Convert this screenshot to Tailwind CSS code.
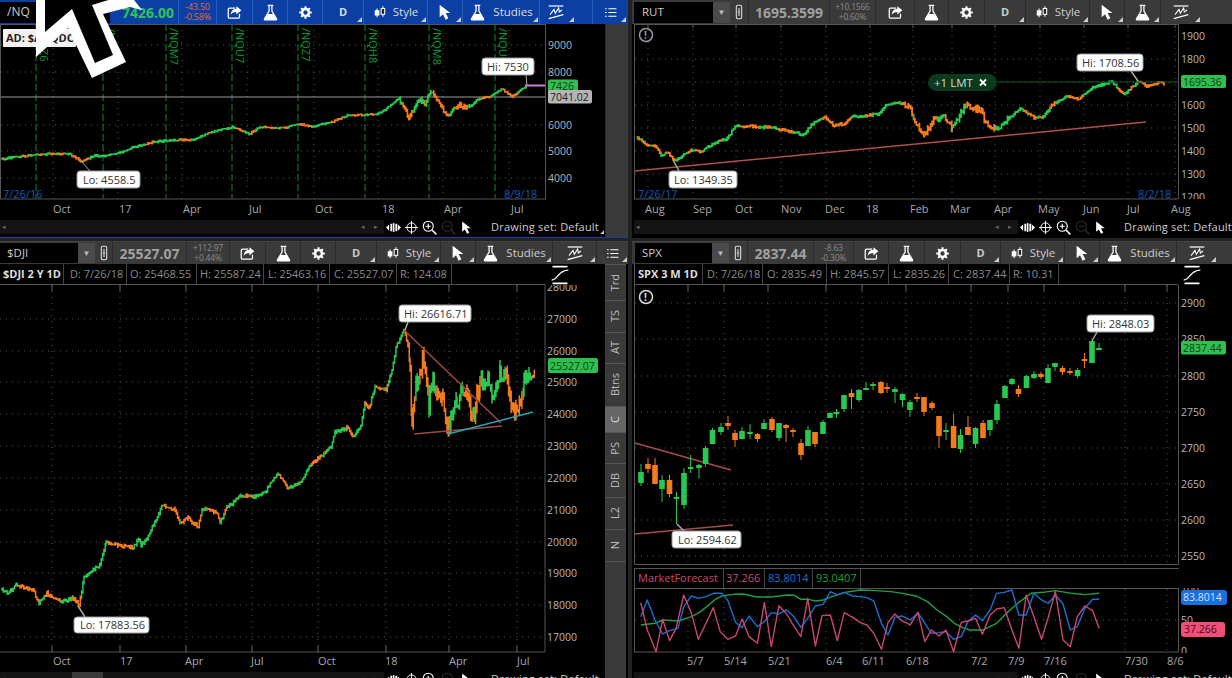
<!DOCTYPE html>
<html>
<head>
<meta charset="utf-8">
<script src="https://cdn.jsdelivr.net/npm/@tailwindcss/browser@4"></script>
<title>Charts</title>
</head>
<body class="m-0 bg-[#222222]">
<svg width="0" height="0" class="absolute">
  <defs>
    <symbol id="share" viewBox="0 0 24 24"><path d="M13 5H4a2 2 0 0 0-2 2v12a2 2 0 0 0 2 2h14a2 2 0 0 0 2-2v-5" fill="none" stroke="#fff" stroke-width="2"/><path d="M15 2l8 6.500-8 6.500v-4c-4 0-7 1-9 5 0-6 3-9.500 9-10z" fill="#fff"/></symbol>
    <symbol id="flask" viewBox="0 0 24 24"><path d="M8 2h8M10 2v8L3.500 21a1 1 0 0 0 1 1.500h15a1 1 0 0 0 1-1.500L14 10V2" fill="none" stroke="#fff" stroke-width="1.800"/><path d="M7.500 14h9l4 8.500h-17z" fill="#fff"/></symbol>
    <symbol id="gear" viewBox="0 0 24 24"><circle cx="12" cy="12" r="5.500" fill="none" stroke="#fff" stroke-width="4"/><path d="M12 2v4M12 18v4M2 12h4M18 12h4M5 5l3 3M16 16l3 3M19 5l-3 3M8 16l-3 3" stroke="#fff" stroke-width="3.200"/></symbol>
    <symbol id="candles" viewBox="0 0 24 24"><path d="M7 6v15M17 2v18" stroke="#fff" stroke-width="1.800"/><rect x="3" y="9" width="8" height="9" fill="#fff"/><rect x="14" y="6" width="6" height="10" fill="#222" stroke="#fff" stroke-width="1.800"/></symbol>
    <symbol id="arrow" viewBox="0 0 24 24"><path d="M4 1v19l5-4.500 4 8 4-2-4-8h7z" fill="#fff"/></symbol>
    <symbol id="draw" viewBox="0 0 24 24"><path d="M1 3h22" stroke="#fff" stroke-width="1.800"/><path d="M3 16l6-8 2 6 5-8 1 6 4-3" fill="none" stroke="#fff" stroke-width="1.600"/><path d="M1 22l22-6" stroke="#fff" stroke-width="1.800"/></symbol>
    <symbol id="list" viewBox="0 0 24 24"><path d="M8 5h15M8 12h15M8 19h15M2 5h3M2 12h3M2 19h3" stroke="#fff" stroke-width="2"/></symbol>
    <symbol id="link" viewBox="0 0 12 24"><rect x="2" y="2" width="8" height="20" rx="2" fill="none" stroke="#ddd" stroke-width="1.600"/><path d="M6 6v12" stroke="#ddd" stroke-width="1.600"/><path d="M4 12h4" stroke="#ddd"/></symbol>
    <symbol id="pan" viewBox="0 0 24 16"><path d="M0 8l5-5v10zM24 8l-5-5v10z" fill="#fff"/><rect x="7" y="2" width="3" height="12" fill="#fff"/><rect x="11" y="1" width="2.500" height="14" fill="#fff"/><rect x="15" y="2" width="3" height="12" fill="#fff"/></symbol>
    <symbol id="cross" viewBox="0 0 24 24"><circle cx="12" cy="12" r="8.500" fill="none" stroke="#fff" stroke-width="1.800"/><path d="M12 0v24M0 12h24" stroke="#fff" stroke-width="1.800"/></symbol>
    <symbol id="zoomin" viewBox="0 0 24 24"><circle cx="10" cy="10" r="8" fill="none" stroke="#fff" stroke-width="1.800"/><path d="M6 10h8M10 6v8" stroke="#fff" stroke-width="1.800"/><path d="M16 16l7 7" stroke="#fff" stroke-width="2.400"/></symbol>
    <symbol id="zoomout" viewBox="0 0 24 24"><circle cx="10" cy="10" r="8" fill="none" stroke="#2c2c2c" stroke-width="1.800"/><path d="M6 10h8" stroke="#2c2c2c" stroke-width="1.800"/><path d="M16 16l7 7" stroke="#2c2c2c" stroke-width="2.400"/></symbol>
    <symbol id="curve" viewBox="0 0 24 24"><path d="M3 2h18M3 22h18" stroke="#fff" stroke-width="2"/><path d="M2 18c8 0 7-12 20-12" fill="none" stroke="#fff" stroke-width="1.500"/></symbol>
  </defs>
</svg>

<div class="relative flex h-[678px] w-[1232px] overflow-hidden bg-[#222222] font-['Open_Sans',sans-serif]">

  <!-- LEFT COLUMN -->
  <div class="flex w-[632px] shrink-0 flex-col gap-[3px] pr-[4px]">

    <!-- /NQ panel -->
    <section class="flex h-[238px] w-[628px] shrink-0 flex-col overflow-hidden border-r border-b border-[#0b44ad] bg-black">
      <header class="flex h-[24px] shrink-0 items-center bg-[#0b3fa3] text-[#dddddd]">
        <div class="flex h-[21px] w-[110px] items-center bg-black pl-[7px] text-[12px] text-[#cccccc]">/NQ</div>
        <div class="w-[8px]"></div>
        <div class="flex h-full w-[61px] items-center justify-center border-r border-[#2a5bc0] text-[14px] font-bold text-[#2fc45a]">7426.00</div>
        <div class="flex h-full w-[38px] flex-col items-center justify-center border-r border-[#2a5bc0] text-[9px] leading-[10px] tracking-tight text-[#e0683c]"><span>-43.50</span><span>-0.58%</span></div>
        <div class="flex h-full w-[36px] items-center justify-center border-r border-[#2a5bc0]"><svg class="h-[15px] w-[15px]"><use href="#share"/></svg></div>
        <div class="flex h-full w-[35px] items-center justify-center border-r border-[#2a5bc0]"><svg class="h-[17px] w-[17px]"><use href="#flask"/></svg></div>
        <div class="flex h-full w-[35px] items-center justify-center border-r border-[#2a5bc0]"><svg class="h-[15px] w-[15px]"><use href="#gear"/></svg></div>
        <div class="relative flex h-full w-[41px] items-center justify-center border-r border-[#2a5bc0] text-[11px] font-bold">D<span class="absolute right-[1px] bottom-[2px] h-[5px] w-[5px] bg-[#cccccc] [clip-path:polygon(100%_0,100%_100%,0_100%)]"></span></div>
        <div class="relative flex h-full w-[64px] items-center justify-center gap-[6px] border-r border-[#2a5bc0] text-[11.500px]"><svg class="h-[14px] w-[14px]"><use href="#candles"/></svg>Style<span class="absolute right-[1px] bottom-[2px] h-[5px] w-[5px] bg-[#cccccc] [clip-path:polygon(100%_0,100%_100%,0_100%)]"></span></div>
        <div class="relative flex h-full w-[35px] items-center justify-center border-r border-[#2a5bc0]"><svg class="h-[16px] w-[16px]"><use href="#arrow"/></svg><span class="absolute right-[1px] bottom-[2px] h-[5px] w-[5px] bg-[#cccccc] [clip-path:polygon(100%_0,100%_100%,0_100%)]"></span></div>
        <div class="relative flex h-full w-[77px] items-center justify-center gap-[7px] border-r border-[#2a5bc0] text-[11.500px]"><svg class="h-[17px] w-[17px]"><use href="#flask"/></svg>Studies<span class="absolute right-[1px] bottom-[2px] h-[5px] w-[5px] bg-[#cccccc] [clip-path:polygon(100%_0,100%_100%,0_100%)]"></span></div>
        <div class="relative flex h-full w-[53px] items-center justify-start border-r border-[#2a5bc0] pl-[8px]"><svg class="h-[16px] w-[16px]"><use href="#draw"/></svg><span class="absolute right-[18px] bottom-[2px] h-[5px] w-[5px] bg-[#cccccc] [clip-path:polygon(100%_0,100%_100%,0_100%)]"></span></div>
        <div class="relative flex h-full flex-1 items-center justify-center"><svg class="h-[13px] w-[13px]"><use href="#list"/></svg><span class="absolute right-[1px] bottom-[2px] h-[5px] w-[5px] bg-[#cccccc] [clip-path:polygon(100%_0,100%_100%,0_100%)]"></span></div>
      </header>
      <div class="flex min-h-0 flex-1">
        <div class="flex w-[605px] shrink-0 flex-col">
          <svg class="block shrink-0" width="605" height="196" viewBox="0 24 605 196" font-size="10.500">
            <g stroke="#555" stroke-dasharray="1 5">
              <path d="M1 45H545M1 72H545M1 125H545M1 151H545M1 178H545"/>
              <path d="M53 24V199M118 24V199M182 24V199M247 24V199M314 24V199M378 24V199M443 24V199M509 24V199"/>
            </g>
            <g stroke="#0c8a30" stroke-dasharray="7 3">
              <path d="M36 24V199M103 24V199M166 24V199M232 24V199M298 24V199M365 24V199M429 24V199M495 24V199"/>
            </g>
            <g fill="#0f9a38" font-size="11">
              <text transform="translate(40 28) rotate(90)">/NQZ6</text>
              <text transform="translate(107 28) rotate(90)">/NQH7</text>
              <text transform="translate(170 28) rotate(90)">/NQM7</text>
              <text transform="translate(236 28) rotate(90)">/NQU7</text>
              <text transform="translate(302 28) rotate(90)">/NQZ7</text>
              <text transform="translate(369 28) rotate(90)">/NQH8</text>
              <text transform="translate(433 28) rotate(90)">/NQM8</text>
              <text transform="translate(499 28) rotate(90)">/NQU8</text>
            </g>
            <path d="M1 97H545" stroke="#9a9a9a"/>
            <path id="p1g" fill="none" stroke="#27c950" stroke-width="1.700"/>
            <path id="p1o" fill="none" stroke="#f47a1e" stroke-width="1.700"/>
            <path d="M525 85.500H545" stroke="#d080d8" stroke-width="2"/>
            <rect x="0.500" y="24.500" width="545" height="174.500" fill="none" stroke="#555"/>
            <rect x="3" y="29" width="73" height="18" rx="1" fill="#f2f2f2"/>
            <text x="6" y="42" font-size="11" font-weight="700" fill="#222">AD: $ADQDC</text>
            <g fill="#0f5cb8" font-size="11">
              <text x="3" y="198">7/26/16</text>
              <text x="504" y="198">8/9/18</text>
            </g>
            <g fill="#b8b8b8">
              <text x="548" y="49">9000</text><text x="548" y="76">8000</text><text x="548" y="129">6000</text><text x="548" y="155">5000</text><text x="548" y="182">4000</text>
            </g>
            <rect x="548" y="79.500" width="30" height="13" rx="2" fill="#2fbf4f"/><text x="550" y="90" fill="#0f3d1a">7426</text>
            <rect x="548" y="90" width="44" height="13.500" rx="2" fill="#b5b5b5"/><text x="550" y="101" fill="#222">7041.02</text>
            <path d="M526 75L527 85.500" stroke="#aaa"/>
            <rect x="482" y="58" width="52" height="17" rx="3" fill="#fff" stroke="#999"/><text x="487" y="71" fill="#333" font-size="11">Hi: 7530</text>
            <path d="M81 161L90 171" stroke="#aaa"/>
            <rect x="77" y="171" width="63" height="17" rx="3" fill="#fff" stroke="#999"/><text x="83" y="184" fill="#333" font-size="11">Lo: 4558.5</text>
            <g fill="#a8a8a8" font-size="11">
              <text x="53" y="213">Oct</text><text x="119" y="213">17</text><text x="183" y="213">Apr</text><text x="249" y="213">Jul</text><text x="315" y="213">Oct</text><text x="382" y="213">18</text><text x="444" y="213">Apr</text><text x="511" y="213">Jul</text>
            </g>
          </svg>
          <div class="flex h-[14px] shrink-0 items-center text-[#cccccc]">
            <div class="flex h-full w-[384px] items-center justify-between bg-[#141414] px-[2px] text-[7px] text-[#666666]"><span>◂</span><span class="flex gap-[9px] pr-[4px]"><span>◂</span><span>▸</span></span></div>
            <div class="flex items-center gap-[4px] pl-[2px]">
              <svg class="h-[11px] w-[15px]"><use href="#pan"/></svg>
              <svg class="h-[13px] w-[13px]"><use href="#cross"/></svg>
              <svg class="h-[15px] w-[15px]"><use href="#zoomin"/></svg>
              <svg class="h-[15px] w-[15px]"><use href="#zoomout"/></svg>
              <svg class="h-[15px] w-[13px]"><use href="#arrow"/></svg>
            </div>
            <span class="relative ml-[18px] flex-1 whitespace-nowrap text-[11px] tracking-[0.2px]">Drawing set: Default<span class="absolute right-[1px] bottom-[1px] h-[4px] w-[4px] bg-[#cccccc] [clip-path:polygon(100%_0,100%_100%,0_100%)]"></span></span>
          </div>
        </div>
        <aside class="mb-[0px] flex-1 border-l border-[#2b2b2b] bg-[#3a3a3a]"></aside>
      </div>
    </section>

    <!-- $DJI panel -->
    <section class="flex h-[437px] w-[628px] shrink-0 flex-col overflow-hidden border-t border-[#444444] bg-black">
      <header class="flex h-[22px] shrink-0 items-center bg-[#3a3a3a] text-[#cccccc]">
        <div class="flex h-[20px] w-[95px] items-center justify-between bg-black pl-[7px] text-[11.500px] text-[#cccccc]">$DJI<span class="flex h-full w-[17px] items-center justify-center bg-[#4a4a4a] text-[8px] text-[#bbbbbb]">▼</span></div>
        <div class="flex h-full w-[18px] items-center justify-center border-r border-[#2b2b2b]"><svg class="h-[16px] w-[8px]"><use href="#link"/></svg></div>
        <div class="flex h-full w-[74px] items-center justify-center border-r border-[#2b2b2b] text-[14px] font-bold text-[#a0a0a0]">25527.07</div>
        <div class="flex h-full w-[43px] flex-col items-center justify-center border-r border-[#2b2b2b] text-[8.500px] leading-[10px] tracking-tight text-[#8a8a8a]"><span>+112.97</span><span>+0.44%</span></div>
        <div class="flex h-full w-[36px] items-center justify-center border-r border-[#2b2b2b]"><svg class="h-[15px] w-[15px]"><use href="#share"/></svg></div>
        <div class="flex h-full w-[35px] items-center justify-center border-r border-[#2b2b2b]"><svg class="h-[17px] w-[17px]"><use href="#flask"/></svg></div>
        <div class="flex h-full w-[35px] items-center justify-center border-r border-[#2b2b2b]"><svg class="h-[15px] w-[15px]"><use href="#gear"/></svg></div>
        <div class="relative flex h-full w-[41px] items-center justify-center border-r border-[#2b2b2b] text-[11px] font-bold">D<span class="absolute right-[1px] bottom-[2px] h-[5px] w-[5px] bg-[#cccccc] [clip-path:polygon(100%_0,100%_100%,0_100%)]"></span></div>
        <div class="relative flex h-full w-[64px] items-center justify-center gap-[6px] border-r border-[#2b2b2b] text-[11.500px]"><svg class="h-[14px] w-[14px]"><use href="#candles"/></svg>Style<span class="absolute right-[1px] bottom-[2px] h-[5px] w-[5px] bg-[#cccccc] [clip-path:polygon(100%_0,100%_100%,0_100%)]"></span></div>
        <div class="relative flex h-full w-[35px] items-center justify-center border-r border-[#2b2b2b]"><svg class="h-[16px] w-[16px]"><use href="#arrow"/></svg><span class="absolute right-[1px] bottom-[2px] h-[5px] w-[5px] bg-[#cccccc] [clip-path:polygon(100%_0,100%_100%,0_100%)]"></span></div>
        <div class="relative flex h-full w-[77px] items-center justify-center gap-[7px] border-r border-[#2b2b2b] text-[11.500px]"><svg class="h-[17px] w-[17px]"><use href="#flask"/></svg>Studies<span class="absolute right-[1px] bottom-[2px] h-[5px] w-[5px] bg-[#cccccc] [clip-path:polygon(100%_0,100%_100%,0_100%)]"></span></div>
        <div class="relative flex h-full w-[44px] items-center justify-center border-r border-[#2b2b2b]"><svg class="h-[16px] w-[16px]"><use href="#draw"/></svg><span class="absolute right-[1px] bottom-[2px] h-[5px] w-[5px] bg-[#cccccc] [clip-path:polygon(100%_0,100%_100%,0_100%)]"></span></div>
        <div class="relative flex h-full flex-1 items-center justify-center"><svg class="h-[13px] w-[13px]"><use href="#list"/></svg><span class="absolute right-[1px] bottom-[2px] h-[5px] w-[5px] bg-[#cccccc] [clip-path:polygon(100%_0,100%_100%,0_100%)]"></span></div>
      </header>
      <div class="flex min-h-0 flex-1">
        <div class="flex w-[605px] shrink-0 flex-col">
          <div class="flex h-[21px] shrink-0">
            <div class="flex w-[545px] border-b border-[#555555] text-[11px] text-[#8a8a8a]">
              <div class="flex w-[64px] items-center border-r border-[#444444] pl-[3px] font-bold text-[#dddddd]">$DJI 2 Y 1D</div>
              <div class="flex w-[63px] items-center border-r border-[#444444] pl-[6px]">D: 7/26/18</div>
              <div class="flex w-[70px] items-center border-r border-[#444444] pl-[3px]">O: 25468.55</div>
              <div class="flex w-[67px] items-center border-r border-[#444444] pl-[3px]">H: 25587.24</div>
              <div class="flex w-[66px] items-center border-r border-[#444444] pl-[4px]">L: 25463.16</div>
              <div class="flex w-[67px] items-center border-r border-[#444444] pl-[4px]">C: 25527.07</div>
              <div class="flex w-[55px] items-center border-r border-[#444444] pl-[3px]">R: 124.08</div>
            </div>
            <div class="flex flex-1 items-center pl-[5px]"><svg class="h-[20px] w-[20px]"><use href="#curve"/></svg></div>
          </div>
          <svg class="block shrink-0" width="605" height="387" viewBox="0 285 605 387" font-size="10.500">
            <g stroke="#555" stroke-dasharray="1 5">
              <path d="M0 319H545M0 351H545M0 382H545M0 414H545M0 446H545M0 478H545M0 510H545M0 542H545M0 573H545M0 605H545M0 637H545"/>
              <path d="M52 285V652M120 285V652M186 285V652M252 285V652M318 285V652M386 285V652M449 285V652M517 285V652"/>
            </g>
            <path d="M52 285V291M120 285V291M186 285V291M252 285V291M318 285V291M386 285V291M449 285V291M517 285V291M52 652V646M120 652V646M186 652V646M252 652V646M318 652V646M386 652V646M449 652V646M517 652V646" stroke="#666"/>
            <path id="p3g" fill="none" stroke="#27c950" stroke-width="1.500"/>
            <path id="p3o" fill="none" stroke="#f47a1e" stroke-width="1.500"/>
            <g fill="none" stroke-width="1.500">
              <path d="M404 330L501 423M414 434L502 426" stroke="#a04a48"/>
              <path d="M448 434L533 412" stroke="#1fa8b8"/>
            </g>
            <path d="M0 652H545M545 285V652" stroke="#555"/>
            <g fill="#b8b8b8">
              <text x="547" y="291">28000</text><text x="547" y="323">27000</text><text x="547" y="355">26000</text><text x="547" y="386">25000</text><text x="547" y="418">24000</text><text x="547" y="450">23000</text><text x="547" y="482">22000</text><text x="547" y="514">21000</text><text x="547" y="546">20000</text><text x="547" y="577">19000</text><text x="547" y="609">18000</text><text x="547" y="641">17000</text>
            </g>
            <rect x="548" y="358" width="50" height="15" rx="2" fill="#2fbf4f"/><text x="550" y="369.500" fill="#0f3d1a">25527.07</text>
            <path d="M405 330L408 322" stroke="#aaa" stroke-width="1.500"/>
            <rect x="399" y="305" width="72" height="17" rx="3" fill="#fff" stroke="#999"/><text x="404" y="318" fill="#333" font-size="11">Hi: 26616.71</text>
            <path d="M78 606L85 617" stroke="#aaa" stroke-width="1.500"/>
            <rect x="74" y="617" width="75" height="16" rx="3" fill="#fff" stroke="#999"/><text x="80" y="629" fill="#333" font-size="11">Lo: 17883.56</text>
            <g fill="#a8a8a8" font-size="11">
              <text x="53" y="665">Oct</text><text x="120" y="665">17</text><text x="185" y="665">Apr</text><text x="251" y="665">Jul</text><text x="318" y="665">Oct</text><text x="385" y="665">18</text><text x="449" y="665">Apr</text><text x="517" y="665">Jul</text>
            </g>
          </svg>
          <div class="flex h-[14px] shrink-0 items-center text-[#cccccc]">
            <div class="relative flex h-full w-[384px] items-center justify-between bg-[#141414] px-[2px] text-[7px] text-[#666666]"><span>◂</span><span class="absolute left-[72px] top-0 h-full w-[31px] bg-[#3a3a3a]"></span><span class="flex gap-[9px] pr-[4px]"><span>◂</span><span>▸</span></span></div>
            <div class="flex items-center gap-[4px] pl-[2px]">
              <svg class="h-[11px] w-[15px]"><use href="#pan"/></svg>
              <svg class="h-[13px] w-[13px]"><use href="#cross"/></svg>
              <svg class="h-[15px] w-[15px]"><use href="#zoomin"/></svg>
              <svg class="h-[15px] w-[15px]"><use href="#zoomout"/></svg>
              <svg class="h-[15px] w-[13px]"><use href="#arrow"/></svg>
            </div>
            <span class="ml-[18px] whitespace-nowrap text-[11px] tracking-[0.2px]">Drawing set: Default</span>
          </div>
        </div>
        <nav class="flex w-[21px] shrink-0 flex-col border-t border-[#555555] bg-[#3a3a3a] text-[11px] text-[#bbbbbb]">
          <div class="flex h-[36px] items-center justify-center border-b border-[#555555]"><span class="rotate-180 [writing-mode:vertical-rl]">Trd</span></div>
          <div class="flex h-[32px] items-center justify-center border-b border-[#555555]"><span class="rotate-180 [writing-mode:vertical-rl]">TS</span></div>
          <div class="flex h-[31px] items-center justify-center border-b border-[#555555]"><span class="rotate-180 [writing-mode:vertical-rl]">AT</span></div>
          <div class="flex h-[43px] items-center justify-center border-b border-[#555555]"><span class="rotate-180 [writing-mode:vertical-rl]">Btns</span></div>
          <div class="flex h-[26px] items-center justify-center border-b border-[#555555] bg-[#666666] text-[#dddddd]"><span class="rotate-180 [writing-mode:vertical-rl]">C</span></div>
          <div class="flex h-[31px] items-center justify-center border-b border-[#555555]"><span class="rotate-180 [writing-mode:vertical-rl]">PS</span></div>
          <div class="flex h-[34px] items-center justify-center border-b border-[#555555]"><span class="rotate-180 [writing-mode:vertical-rl]">DB</span></div>
          <div class="flex h-[32px] items-center justify-center border-b border-[#555555]"><span class="rotate-180 [writing-mode:vertical-rl]">L2</span></div>
          <div class="flex h-[32px] items-center justify-center border-b border-[#555555]"><span class="rotate-180 [writing-mode:vertical-rl]">N</span></div>
        </nav>
      </div>
    </section>
  </div>

  <!-- RIGHT COLUMN -->
  <div class="flex w-[600px] shrink-0 flex-col gap-[3px]">

    <!-- RUT panel -->
    <section class="flex h-[238px] w-[600px] shrink-0 flex-col overflow-hidden bg-black">
      <header class="flex h-[24px] shrink-0 items-center bg-[#3a3a3a] text-[#cccccc]">
        <div class="ml-[2px] flex h-[21px] w-[96px] items-center justify-between bg-black pl-[8px] text-[11.500px] text-[#cccccc]">RUT<span class="flex h-full w-[17px] items-center justify-center bg-[#4a4a4a] text-[8px] text-[#bbbbbb]">▼</span></div>
        <div class="flex h-full w-[19px] items-center justify-center border-r border-[#2b2b2b]"><svg class="h-[16px] w-[8px]"><use href="#link"/></svg></div>
        <div class="flex h-full w-[81px] items-center justify-center border-r border-[#2b2b2b] text-[14px] font-bold text-[#a0a0a0]">1695.3599</div>
        <div class="flex h-full w-[46px] flex-col items-center justify-center border-r border-[#2b2b2b] text-[8.500px] leading-[10px] tracking-tight text-[#8a8a8a]"><span>+10.1566</span><span>+0.60%</span></div>
        <div class="flex h-full w-[39px] items-center justify-center border-r border-[#2b2b2b]"><svg class="h-[15px] w-[15px]"><use href="#share"/></svg></div>
        <div class="flex h-full w-[34px] items-center justify-center border-r border-[#2b2b2b]"><svg class="h-[17px] w-[17px]"><use href="#flask"/></svg></div>
        <div class="flex h-full w-[36px] items-center justify-center border-r border-[#2b2b2b]"><svg class="h-[15px] w-[15px]"><use href="#gear"/></svg></div>
        <div class="relative flex h-full w-[41px] items-center justify-center border-r border-[#2b2b2b] text-[11px] font-bold">D<span class="absolute right-[1px] bottom-[2px] h-[5px] w-[5px] bg-[#cccccc] [clip-path:polygon(100%_0,100%_100%,0_100%)]"></span></div>
        <div class="relative flex h-full w-[64px] items-center justify-center gap-[6px] border-r border-[#2b2b2b] text-[11.500px]"><svg class="h-[14px] w-[14px]"><use href="#candles"/></svg>Style<span class="absolute right-[1px] bottom-[2px] h-[5px] w-[5px] bg-[#cccccc] [clip-path:polygon(100%_0,100%_100%,0_100%)]"></span></div>
        <div class="relative flex h-full w-[35px] items-center justify-center border-r border-[#2b2b2b]"><svg class="h-[16px] w-[16px]"><use href="#arrow"/></svg><span class="absolute right-[1px] bottom-[2px] h-[5px] w-[5px] bg-[#cccccc] [clip-path:polygon(100%_0,100%_100%,0_100%)]"></span></div>
        <div class="relative flex h-full w-[36px] items-center justify-center border-r border-[#2b2b2b]"><svg class="h-[17px] w-[17px]"><use href="#flask"/></svg><span class="absolute right-[1px] bottom-[2px] h-[5px] w-[5px] bg-[#cccccc] [clip-path:polygon(100%_0,100%_100%,0_100%)]"></span></div>
        <div class="relative flex h-full w-[40px] items-center justify-center"><svg class="h-[16px] w-[16px]"><use href="#draw"/></svg><span class="absolute right-[1px] bottom-[2px] h-[5px] w-[5px] bg-[#cccccc] [clip-path:polygon(100%_0,100%_100%,0_100%)]"></span></div>
      </header>
      <svg class="block shrink-0" width="600" height="196" viewBox="632 24 600 196" font-size="10.500">
        <g stroke="#555" stroke-dasharray="1 5">
          <path d="M635 59H1178M635 82H1178M635 105H1178M635 128H1178M635 151H1178M635 174H1178"/>
          <path d="M648 24V199M693 24V199M736 24V199M781 24V199M826 24V199M870 24V199M913 24V199M952 24V199M995 24V199M1040 24V199M1084 24V199M1128 24V199M1175 24V199"/>
        </g>
        <path d="M648 24V28M693 24V28M736 24V28M781 24V28M826 24V28M870 24V28M913 24V28M952 24V28M995 24V28M1040 24V28M1084 24V28M1128 24V28M1175 24V28" stroke="#666"/>
        <path d="M634.500 171L1146 122" stroke="#b0504c" stroke-width="1.500"/>
        <path id="p2g" fill="none" stroke="#27c950" stroke-width="1.800"/>
        <path id="p2o" fill="none" stroke="#f47a1e" stroke-width="1.800"/>
        <path d="M925 82V143" stroke="none"/>
        <path d="M997 82H1178" stroke="#0d5a26"/>
        <rect x="634.500" y="24.500" width="544" height="174.500" fill="none" stroke="#555"/>
        <circle cx="646" cy="35" r="6.500" fill="none" stroke="#999" stroke-width="1.500"/>
        <text x="644" y="39" fill="#999" font-size="10" font-weight="700">!</text>
        <rect x="928" y="74" width="69" height="17" rx="8.500" fill="#0b3a1c"/>
        <text x="934" y="86.500" fill="#d8d8d8" font-size="11.500">+1 LMT</text>
        <path d="M980 79.500l6 6M986 79.500l-6 6" stroke="#fff" stroke-width="1.800"/>
        <g fill="#0f5cb8" font-size="11">
          <text x="638" y="198">7/26/17</text>
          <text x="1138" y="198">8/2/18</text>
        </g>
        <g fill="#b8b8b8">
          <text x="1181" y="40">1900</text><text x="1181" y="63">1800</text><text x="1181" y="109">1600</text><text x="1181" y="132">1500</text><text x="1181" y="155">1400</text><text x="1181" y="178">1300</text><text x="1181" y="201">1200</text>
        </g>
        <rect x="1178" y="199" width="54" height="21" fill="#000"/>
        <rect x="1181" y="75" width="45" height="13" rx="2" fill="#2fbf4f"/><text x="1183" y="85.500" fill="#0f3d1a">1695.36</text>
        <path d="M1138 81L1131 71" stroke="#aaa" stroke-width="1.500"/>
        <rect x="1077" y="54" width="66" height="17" rx="3" fill="#fff" stroke="#999"/><text x="1082" y="67" fill="#333" font-size="11">Hi: 1708.56</text>
        <path d="M673 160L679 171" stroke="#aaa" stroke-width="1.500"/>
        <rect x="669" y="171" width="68" height="17" rx="3" fill="#fff" stroke="#999"/><text x="674" y="184" fill="#333" font-size="11">Lo: 1349.35</text>
        <g fill="#a8a8a8" font-size="11">
          <text x="645" y="213">Aug</text><text x="693" y="213">Sep</text><text x="735" y="213">Oct</text><text x="781" y="213">Nov</text><text x="825" y="213">Dec</text><text x="866" y="213">18</text><text x="910" y="213">Feb</text><text x="950" y="213">Mar</text><text x="994" y="213">Apr</text><text x="1038" y="213">May</text><text x="1083" y="213">Jun</text><text x="1127" y="213">Jul</text><text x="1171" y="213">Aug</text>
        </g>
      </svg>
      <div class="flex h-[14px] shrink-0 items-center text-[#cccccc]">
        <div class="ml-[2px] flex h-full w-[384px] items-center justify-between bg-[#141414] px-[2px] text-[7px] text-[#666666]"><span>◂</span><span class="flex gap-[9px] pr-[4px]"><span>◂</span><span>▸</span></span></div>
        <div class="flex items-center gap-[4px] pl-[2px]">
          <svg class="h-[11px] w-[15px]"><use href="#pan"/></svg>
          <svg class="h-[13px] w-[13px]"><use href="#cross"/></svg>
          <svg class="h-[15px] w-[15px]"><use href="#zoomin"/></svg>
          <svg class="h-[15px] w-[15px]"><use href="#zoomout"/></svg>
          <svg class="h-[15px] w-[13px]"><use href="#arrow"/></svg>
        </div>
        <span class="ml-[17px] whitespace-nowrap text-[11px] tracking-[0.2px]">Drawing set: Default</span>
      </div>
    </section>

    <!-- SPX panel -->
    <section class="flex h-[437px] w-[600px] shrink-0 flex-col overflow-hidden border-t border-[#444444] bg-black">
      <header class="flex h-[22px] shrink-0 items-center bg-[#3a3a3a] text-[#cccccc]">
        <div class="ml-[3px] flex h-[20px] w-[94px] items-center justify-between bg-black pl-[7px] text-[11.500px] text-[#cccccc]">SPX<span class="flex h-full w-[17px] items-center justify-center bg-[#4a4a4a] text-[8px] text-[#bbbbbb]">▼</span></div>
        <div class="flex h-full w-[19px] items-center justify-center border-r border-[#2b2b2b]"><svg class="h-[16px] w-[8px]"><use href="#link"/></svg></div>
        <div class="flex h-full w-[66px] items-center justify-center border-r border-[#2b2b2b] text-[14px] font-bold text-[#a0a0a0]">2837.44</div>
        <div class="flex h-full w-[40px] flex-col items-center justify-center border-r border-[#2b2b2b] text-[8.500px] leading-[10px] tracking-tight text-[#8a8a8a]"><span>-8.63</span><span>-0.30%</span></div>
        <div class="flex h-full w-[35px] items-center justify-center border-r border-[#2b2b2b]"><svg class="h-[15px] w-[15px]"><use href="#share"/></svg></div>
        <div class="flex h-full w-[36px] items-center justify-center border-r border-[#2b2b2b]"><svg class="h-[17px] w-[17px]"><use href="#flask"/></svg></div>
        <div class="flex h-full w-[36px] items-center justify-center border-r border-[#2b2b2b]"><svg class="h-[15px] w-[15px]"><use href="#gear"/></svg></div>
        <div class="relative flex h-full w-[40px] items-center justify-center border-r border-[#2b2b2b] text-[11px] font-bold">D<span class="absolute right-[1px] bottom-[2px] h-[5px] w-[5px] bg-[#cccccc] [clip-path:polygon(100%_0,100%_100%,0_100%)]"></span></div>
        <div class="relative flex h-full w-[64px] items-center justify-center gap-[6px] border-r border-[#2b2b2b] text-[11.500px]"><svg class="h-[14px] w-[14px]"><use href="#candles"/></svg>Style<span class="absolute right-[1px] bottom-[2px] h-[5px] w-[5px] bg-[#cccccc] [clip-path:polygon(100%_0,100%_100%,0_100%)]"></span></div>
        <div class="relative flex h-full w-[35px] items-center justify-center border-r border-[#2b2b2b]"><svg class="h-[16px] w-[16px]"><use href="#arrow"/></svg><span class="absolute right-[1px] bottom-[2px] h-[5px] w-[5px] bg-[#cccccc] [clip-path:polygon(100%_0,100%_100%,0_100%)]"></span></div>
        <div class="relative flex h-full w-[77px] items-center justify-center gap-[7px] border-r border-[#2b2b2b] text-[11.500px]"><svg class="h-[17px] w-[17px]"><use href="#flask"/></svg>Studies<span class="absolute right-[1px] bottom-[2px] h-[5px] w-[5px] bg-[#cccccc] [clip-path:polygon(100%_0,100%_100%,0_100%)]"></span></div>
        <div class="relative flex h-full w-[40px] items-center justify-center"><svg class="h-[16px] w-[16px]"><use href="#draw"/></svg><span class="absolute right-[1px] bottom-[2px] h-[5px] w-[5px] bg-[#cccccc] [clip-path:polygon(100%_0,100%_100%,0_100%)]"></span></div>
      </header>
      <div class="flex h-[21px] shrink-0 pl-[2px]">
        <div class="flex w-[544px] border-b border-l border-[#555555] text-[11px] text-[#8a8a8a]">
          <div class="flex w-[68px] items-center border-r border-[#444444] pl-[3px] font-bold text-[#dddddd]">SPX 3 M 1D</div>
          <div class="flex w-[60px] items-center border-r border-[#444444] pl-[4px]">D: 7/26/18</div>
          <div class="flex w-[64px] items-center border-r border-[#444444] pl-[4px]">O: 2835.49</div>
          <div class="flex w-[62px] items-center border-r border-[#444444] pl-[3px]">H: 2845.57</div>
          <div class="flex w-[60px] items-center border-r border-[#444444] pl-[4px]">L: 2835.26</div>
          <div class="flex w-[61px] items-center border-r border-[#444444] pl-[4px]">C: 2837.44</div>
          <div class="flex w-[49px] items-center border-r border-[#444444] pl-[3px]">R: 10.31</div>
        </div>
        <div class="flex flex-1 items-center pl-[4px]"><svg class="h-[20px] w-[20px]"><use href="#curve"/></svg></div>
      </div>
      <svg class="block shrink-0" width="600" height="387" viewBox="632 285 600 387" font-size="10.500">
        <g stroke="#555" stroke-dasharray="1 5">
          <path d="M635 303H1178M635 339H1178M635 376H1178M635 412H1178M635 448H1178M635 484H1178M635 520H1178M635 556H1178"/>
          <path d="M688 285V564M724 285V564M768 285V564M826 285V564M862 285V564M906 285V564M971 285V564M1008 285V564M1044 285V564M1125 285V564M1167 285V564"/>
        </g>
        <path d="M688 285V291M724 285V291M768 285V291M826 285V291M862 285V291M906 285V291M971 285V291M1008 285V291M1044 285V291M1125 285V291M1167 285V291" stroke="#666"/>
        <path d="M635 443L731 470M635 534L733 525" stroke="#a84c4a" stroke-width="1.500" fill="none"/>
        <path id="p4gw" fill="none" stroke="#27c950" stroke-width="1"/>
        <path id="p4ow" fill="none" stroke="#f47a1e" stroke-width="1"/>
        <path id="p4gb" fill="#27c950"/>
        <path id="p4ob" fill="#f47a1e"/>
        <path d="M634.500 285V564.500H1178.500V285" fill="none" stroke="#555"/>
        <circle cx="646" cy="297" r="6.500" fill="none" stroke="#ddd" stroke-width="1.500"/>
        <text x="644" y="301" fill="#ddd" font-size="10" font-weight="700">!</text>
        <g fill="#b8b8b8">
          <text x="1181" y="307">2900</text><text x="1181" y="343">2850</text><text x="1181" y="380">2800</text><text x="1181" y="416">2750</text><text x="1181" y="452">2700</text><text x="1181" y="488">2650</text><text x="1181" y="524">2600</text><text x="1181" y="560">2550</text>
        </g>
        <rect x="1181" y="341" width="45" height="13.500" rx="2" fill="#2fbf4f"/><text x="1183" y="351.500" fill="#0f3d1a">2837.44</text>
        <path d="M1092 341L1097 332" stroke="#aaa" stroke-width="1.500"/>
        <rect x="1087" y="315" width="67" height="17" rx="3" fill="#fff" stroke="#999"/><text x="1092" y="328" fill="#333" font-size="11">Hi: 2848.03</text>
        <path d="M677 524L684 531" stroke="#aaa" stroke-width="1.500"/>
        <rect x="672" y="531" width="69" height="17" rx="3" fill="#fff" stroke="#999"/><text x="678" y="544" fill="#333" font-size="11">Lo: 2594.62</text>

        <rect x="634.500" y="568.500" width="544" height="83.500" fill="#000" stroke="#555"/>
        <path d="M635 588.500H1178" stroke="#555"/>
        <path d="M723.500 569V588M764.500 569V588M812.500 569V588M860.500 569V588" stroke="#444"/>
        <g font-size="11">
          <text x="638" y="582" fill="#d0486e">MarketForecast</text>
          <text x="726" y="582" fill="#d0486e">37.266</text>
          <text x="768" y="582" fill="#1c6fd0">83.8014</text>
          <text x="816" y="582" fill="#1f9e45">93.0407</text>
        </g>
        <g stroke="#555" stroke-dasharray="1 5">
          <path d="M635 620H1178M688 589V652M724 589V652M768 589V652M826 589V652M862 589V652M906 589V652M971 589V652M1008 589V652M1044 589V652M1125 589V652M1167 589V652"/>
        </g>
        <g transform="translate(630 460) scale(.3839 .3333)" fill="none" stroke-width="1.400" stroke-linejoin="round">
          <polyline vector-effect="non-scaling-stroke" stroke="#1f9e45" points="28,495 65,490 85,480 125,483 160,470 180,458 200,440 220,420 240,408 270,403 295,402 330,411 368,411 410,405 428,406 445,418 465,418 483,423 503,420 525,410 560,397 600,390 640,392 680,395 710,400 745,408 775,425 800,450 825,470 845,490 865,502 885,510 920,510 955,490 985,455 1015,425 1045,400 1075,397 1108,392 1150,400 1185,404 1222,400"/>
          <polyline vector-effect="non-scaling-stroke" stroke="#1c6fd0" points="28,470 45,420 65,480 85,522 103,512 125,505 140,440 160,408 178,415 198,410 217,400 240,400 255,422 275,487 292,503 310,468 332,500 350,485 368,458 388,462 408,450 425,468 445,502 463,475 483,438 503,433 522,395 540,405 558,397 578,408 600,410 617,413 635,423 655,490 672,525 690,472 708,468 730,480 750,458 768,490 785,520 805,518 823,515 843,538 863,530 880,485 900,465 918,482 938,450 955,400 975,397 995,390 1013,465 1032,465 1052,400 1072,420 1090,430 1108,405 1128,432 1147,510 1165,500 1185,445 1205,418 1222,418"/>
          <polyline vector-effect="non-scaling-stroke" stroke="#c8486e" points="28,428 45,510 68,575 85,478 103,542 120,505 140,405 160,460 178,538 198,490 217,443 235,515 255,538 275,528 292,477 310,530 332,550 350,427 368,560 388,437 408,462 425,495 445,530 463,415 483,558 500,467 522,465 540,542 558,458 580,472 600,488 617,495 635,520 655,568 672,488 690,462 708,482 730,495 750,457 768,545 785,510 805,528 823,510 843,575 863,487 880,483 900,475 918,523 938,465 955,447 975,443 995,510 1013,565 1032,405 1052,470 1072,538 1090,470 1108,395 1128,540 1147,560 1165,470 1185,438 1205,452 1222,505"/>
        </g>
        <g fill="#b8b8b8">
          <text x="1181" y="594">100</text><text x="1181" y="624">50</text><text x="1181" y="655">0</text>
        </g>
        <rect x="1178" y="569" width="54" height="19" fill="#000"/>
        <rect x="1178" y="653" width="54" height="6" fill="#000"/>
        <rect x="1181" y="590" width="46" height="15" rx="3" fill="#1a6fe0"/><text x="1183" y="601" fill="#cfe0ff">83.8014</text>
        <rect x="1181" y="622" width="44" height="15" rx="3" fill="#ef4f78"/><text x="1184" y="633" fill="#4a0a1c">37.266</text>
        <g fill="#a8a8a8" font-size="11">
          <text x="687" y="665">5/7</text><text x="724" y="665">5/14</text><text x="768" y="665">5/21</text><text x="826" y="665">6/4</text><text x="862" y="665">6/11</text><text x="906" y="665">6/18</text><text x="971" y="665">7/2</text><text x="1008" y="665">7/9</text><text x="1044" y="665">7/16</text><text x="1125" y="665">7/30</text><text x="1167" y="665">8/6</text>
        </g>
      </svg>
      <div class="flex h-[14px] shrink-0 items-center text-[#cccccc]">
        <div class="ml-[2px] flex h-full w-[384px] items-center justify-between bg-[#141414] px-[2px] text-[7px] text-[#666666]"><span>◂</span><span class="flex gap-[9px] pr-[4px]"><span>◂</span><span>▸</span></span></div>
        <div class="flex items-center gap-[4px] pl-[2px]">
          <svg class="h-[11px] w-[15px]"><use href="#pan"/></svg>
          <svg class="h-[13px] w-[13px]"><use href="#cross"/></svg>
          <svg class="h-[15px] w-[15px]"><use href="#zoomin"/></svg>
          <svg class="h-[15px] w-[15px]"><use href="#zoomout"/></svg>
          <svg class="h-[15px] w-[13px]"><use href="#arrow"/></svg>
        </div>
        <span class="ml-[17px] whitespace-nowrap text-[11px] tracking-[0.2px]">Drawing set: Default</span>
      </div>
    </section>
  </div>

  <!-- Oversized mouse pointer caught in the capture -->
  <svg class="absolute top-0 left-0 z-50" width="150" height="85" viewBox="0 0 150 85">
    <polygon fill="#fff" points="36,-5 36,57 68,28 92,78 126,62 103,14 130,7 142,10 130,-5"/>
    <polygon fill="#000" points="45,-5 45,32 72,9 95,63 113,55 92,5 125,-5"/>
  </svg>
</div>

<script>
function series(gid, oid, pts, step, amp, seed, wild) {
  var s = seed;
  function r() { s = (s * 16807) % 2147483647; return s / 2147483647; }
  var g = '', o = '', up = true, py = pts[0][1];
  for (var i = 0; i < pts.length - 1; i++) {
    var a = pts[i], b = pts[i + 1];
    var slope = (b[1] - a[1]) / (b[0] - a[0]);
    for (var x = a[0]; x < b[0]; x += step) {
      var t = (x - a[0]) / (b[0] - a[0]);
      var am = (wild && x > wild[0] && x < wild[1]) ? wild[2] : amp;
      var y = a[1] + (b[1] - a[1]) * t + (r() - 0.5) * am;
      var pUp = slope < -0.15 ? 0.85 : slope > 0.15 ? 0.15 : 0.55;
      if (r() < 0.35) up = r() < pUp;
      var h = 0.6 + r() * am * 0.4;
      var top = Math.min(py, y) - h, bot = Math.max(py, y) + h;
      var seg = 'M' + x.toFixed(1) + ' ' + top.toFixed(1) + 'V' + bot.toFixed(1);
      py = y;
      if (up) g += seg; else o += seg;
    }
  }
  document.getElementById(gid).setAttribute('d', g);
  document.getElementById(oid).setAttribute('d', o);
}
series('p1g', 'p1o', [[2,159],[24,156],[47,154],[69,154],[81,161],[97,155],[99,157],[119,153],[134,147],[154,142],[174,140],[194,140],[209,133],[233,127],[249,134],[261,127],[285,128],[300,124],[312,127],[332,122],[348,115],[368,115],[381,113],[399,98],[409,118],[419,100],[425,103],[431,92],[447,115],[460,105],[468,108],[478,99],[490,97],[502,89],[512,97],[526,86]], 1.4, 1.6, 7331, [400, 470, 4]);
var rut = [[45,415],[70,435],[90,440],[105,465],[120,458],[140,482],[185,450],[205,455],[240,430],[275,415],[295,378],[340,378],[400,385],[440,395],[470,405],[490,375],[525,350],[545,375],[575,372],[590,352],[660,342],[680,318],[715,307],[740,322],[755,365],[780,405],[805,355],[830,350],[850,385],[885,315],[925,330],[935,372],[965,385],[1000,350],[1025,325],[1060,352],[1085,350],[1105,315],[1145,290],[1175,298],[1210,262],[1260,245],[1290,285],[1325,245],[1350,258],[1385,245],[1395,258]].map(function (p) { return [p[0] / 2.56 + 620, p[1] / 3]; });
series('p2g', 'p2o', rut, 1.5, 2.2, 9211, [905, 1010, 5]);
series('p3g', 'p3o', [[2,590],[8,593],[16,585],[33,590],[39,603],[47,593],[61,602],[73,598],[79,606],[84,577],[100,565],[106,543],[118,545],[133,548],[139,538],[141,545],[147,538],[159,513],[162,505],[175,510],[180,523],[188,518],[198,527],[202,509],[216,512],[220,522],[227,508],[241,495],[255,497],[265,492],[278,473],[288,488],[300,483],[310,465],[320,457],[331,447],[335,432],[347,428],[353,437],[361,425],[365,403],[369,408],[375,387],[386,390],[392,370],[396,347],[404,330],[408,347],[410,373],[412,420],[416,387],[424,357],[429,403],[433,383],[443,400],[447,428],[457,403],[463,387],[473,417],[480,383],[488,380],[492,403],[500,370],[506,377],[512,407],[518,412],[524,383],[529,380],[533,377],[535.5,364]], 1.3, 3, 4177, [408, 530, 16]);
var C = [[641,464,486,472,483,1],[648,458,473,464,469,0],[655,458,484,465,484,0],[662,475,502,480,489,1],[669.5,475,497,480,494,0],[676.5,492,524,497,499,1],[684,468,509,473,505,1],[690.6,455,473,467,469,1],[699,464,479,465,468,1],[705.6,446,467,448,464,1],[712.5,428,444,430,444,1],[721,423,435,427,432,1],[728,416,430,423,426,0],[735,430,447,433,440,0],[742,427,439,431,439,1],[750,424,439,432,434,1],[757.5,433,442,434,439,0],[764,419,429,423,429,1],[772,417,432,419,430,0],[779,423,441,423,438,1],[786,424,442,425,428,0],[793,428,437,430,432,0],[801,439,460,443,455,0],[808,426,446,430,446,1],[815,432,447,432,444,0],[823,420,434,422,434,1],[830,412,418,413,418,1],[836.5,409,418,412,414,1],[844,395,412,395,409,1],[851.5,389,409,393,397,0],[859,389,402,390,400,1],[866,382,390,388,390,1],[873,382,390,384,386,1],[881,381,394,382,393,0],[887,383,393,387,389,0],[895,387,403,389,392,1],[902.5,393,407,394,400,1],[910,400,417,402,410,1],[917,393,402,397,399,0],[924,397,416,397,412,0],[932,401,410,403,408,0],[939,416,448,416,436,0],[946,423,440,430,432,1],[953.6,414,448,426,448,0],[960.5,429,453,435,449,1],[968,416,435,427,435,0],[975.5,427,448,428,444,1],[983,420,438,423,438,0],[990,420,436,420,430,1],[997,400,424,404,420,1],[1005,385,398,386,398,1],[1012,378,385,379,384,1],[1018.5,385,397,389,394,0],[1026.5,375,388,376,388,1],[1034,371,379,374,378,1],[1041,372,379,374,377,0],[1048,364,383,368,383,1],[1055,363,371,363,367,1],[1062.5,366,375,368,372,0],[1070,368,375,371,373,0],[1077.6,368,378,370,376,1],[1084.5,353,368,359,361,0],[1092,341,363,341,363,1],[1099,343,350,348,350,1]];
var w = ['', ''], b = ['', ''];
C.forEach(function (c) {
  var k = c[5];
  w[k] += 'M' + c[0] + ' ' + c[1] + 'V' + c[2];
  b[k] += 'M' + (c[0] - 2.8) + ' ' + c[3] + 'h5.600V' + c[4] + 'h-5.600z';
});
document.getElementById('p4gw').setAttribute('d', w[1]);
document.getElementById('p4ow').setAttribute('d', w[0]);
document.getElementById('p4gb').setAttribute('d', b[1]);
document.getElementById('p4ob').setAttribute('d', b[0]);
</script>
</body>
</html>
